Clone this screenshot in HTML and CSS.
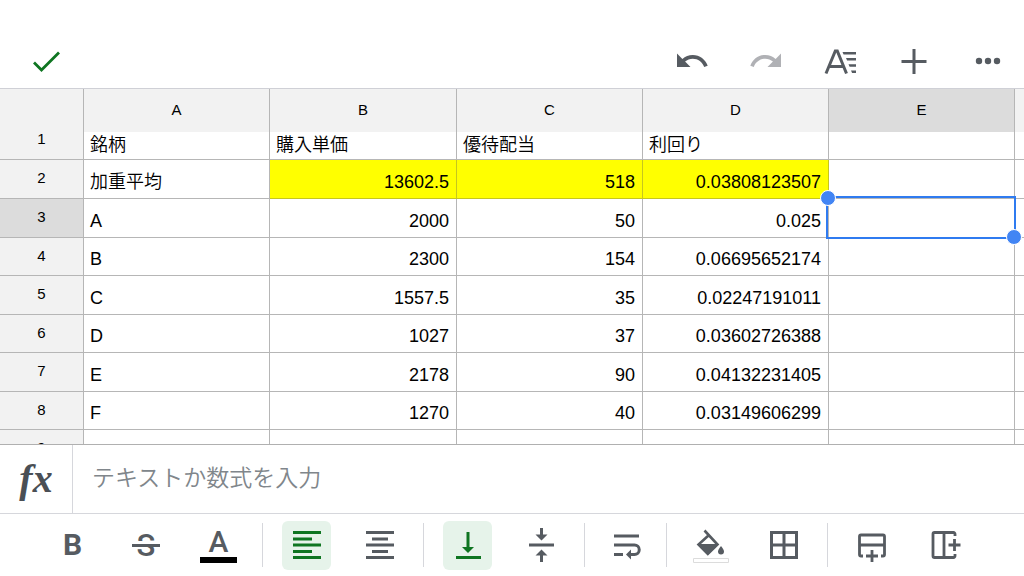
FILE: index.html
```html
<!DOCTYPE html>
<html lang="ja">
<head>
<meta charset="utf-8">
<meta name="viewport" content="width=device-width, initial-scale=1">
<title>スプレッドシート</title>
<link rel="stylesheet" href="styles.css">
</head>
<body>
<header class="topbar">
  <button class="icon-button done" type="button" aria-label="完了">
    <svg viewBox="0 0 36 36"><path d="M6 19.500l7.500 7.500L31 9.500" fill="none" stroke="currentColor" stroke-width="2.800"/></svg>
  </button>
  <div class="topbar-actions">
    <button class="icon-button" type="button" aria-label="元に戻す">
      <svg viewBox="0 0 24 24"><path fill="currentColor" d="M12.500 8c-2.650 0-5.050.990-6.900 2.600L2 7v9h9l-3.620-3.620c1.390-1.160 3.160-1.880 5.120-1.880 3.540 0 6.550 2.310 7.600 5.500l2.370-.780C21.080 11.030 17.150 8 12.500 8z"/></svg>
    </button>
    <button class="icon-button" type="button" aria-label="やり直す" disabled>
      <svg viewBox="0 0 24 24"><path fill="currentColor" d="M18.400 10.600C16.550 8.990 14.150 8 11.500 8c-4.650 0-8.580 3.030-9.960 7.220L3.900 16c1.050-3.190 4.050-5.500 7.600-5.500 1.950 0 3.730.720 5.120 1.880L13 16h9V7l-3.600 3.600z"/></svg>
    </button>
    <button class="icon-button" type="button" aria-label="書式">
      <svg viewBox="0 0 36 36"><g fill="none" stroke="currentColor" stroke-width="3"><path d="M4 30.500L13.300 8h2L24.500 30.500M8 23.500h13"/></g><path fill="currentColor" d="M20.500 9H34v2.600H21.600zM24 15h10v2.600h-8.900zM26.500 21.200H34v2.600h-6.400zM29 27.400h5V30h-3.900z"/></svg>
    </button>
    <button class="icon-button" type="button" aria-label="挿入">
      <svg viewBox="0 0 36 36"><path d="M18 6v25M5.500 18.500h25" fill="none" stroke="currentColor" stroke-width="3"/></svg>
    </button>
    <button class="icon-button" type="button" aria-label="その他">
      <svg viewBox="0 0 36 36" fill="currentColor"><circle cx="9" cy="18" r="3.200"/><circle cx="18" cy="18" r="3.200"/><circle cx="27" cy="18" r="3.200"/></svg>
    </button>
  </div>
</header>

<main class="sheet">
  <table class="grid">
    <colgroup><col class="col-index"><col class="col-data"><col class="col-data col-wide"><col class="col-data"><col class="col-data"><col class="col-data"><col></colgroup>
    <thead>
      <tr><td class="corner"></td><th scope="col">A</th><th scope="col">B</th><th scope="col">C</th><th scope="col">D</th><th scope="col" class="current">E</th><th scope="col"></th></tr>
    </thead>
    <tbody>
      <tr class="first"><th scope="row">1</th><td>銘柄</td><td>購入単価</td><td>優待配当</td><td>利回り</td><td></td><td></td></tr>
      <tr class="highlight"><th scope="row">2</th><td>加重平均</td><td class="num">13602.5</td><td class="num">518</td><td class="num">0.03808123507</td><td></td><td></td></tr>
      <tr><th scope="row" class="current">3</th><td>A</td><td class="num">2000</td><td class="num">50</td><td class="num">0.025</td><td class="selected"><span class="selection"></span></td><td></td></tr>
      <tr><th scope="row">4</th><td>B</td><td class="num">2300</td><td class="num">154</td><td class="num">0.06695652174</td><td></td><td></td></tr>
      <tr><th scope="row">5</th><td>C</td><td class="num">1557.5</td><td class="num">35</td><td class="num">0.02247191011</td><td></td><td></td></tr>
      <tr><th scope="row">6</th><td>D</td><td class="num">1027</td><td class="num">37</td><td class="num">0.03602726388</td><td></td><td></td></tr>
      <tr><th scope="row">7</th><td>E</td><td class="num">2178</td><td class="num">90</td><td class="num">0.04132231405</td><td></td><td></td></tr>
      <tr><th scope="row">8</th><td>F</td><td class="num">1270</td><td class="num">40</td><td class="num">0.03149606299</td><td></td><td></td></tr>
      <tr><th scope="row">9</th><td></td><td></td><td></td><td></td><td></td><td></td></tr>
    </tbody>
  </table>
</main>

<div class="formula">
  <label class="formula-label" for="formula">fx</label>
  <input class="formula-input" id="formula" type="text" placeholder="テキストか数式を入力">
</div>

<footer class="toolbar">
  <div class="group">
    <button class="tool bold" type="button" aria-label="太字">B</button>
    <button class="tool" type="button" aria-label="取り消し線">
      <svg viewBox="0 0 36 36"><text class="strike-letter" x="18" y="29" text-anchor="middle">S</text><path d="M6 15.500h24" stroke="#fff" stroke-width="3"/><path d="M4 18.500h28" stroke="currentColor" stroke-width="3"/></svg>
    </button>
    <button class="tool text-color" type="button" aria-label="文字の色">A</button>
  </div>
  <div class="group">
    <button class="tool active" type="button" aria-label="左揃え" aria-pressed="true">
      <svg viewBox="0 0 36 36"><path d="M4 5.500h28M4 12h19M4 18h28M4 24.500h19M4 30.500h28" fill="none" stroke="currentColor" stroke-width="3"/></svg>
    </button>
    <button class="tool" type="button" aria-label="中央揃え">
      <svg viewBox="0 0 36 36"><path d="M4 5.500h28M10 12h16M4 18h28M10 24.500h16M4 30.500h28" fill="none" stroke="currentColor" stroke-width="3"/></svg>
    </button>
  </div>
  <div class="group">
    <button class="tool active" type="button" aria-label="下揃え" aria-pressed="true">
      <svg viewBox="0 0 36 36"><path d="M6 30.500h25M18 5v16" fill="none" stroke="currentColor" stroke-width="3"/><path fill="currentColor" d="M12 20h12l-6 6z"/></svg>
    </button>
    <button class="tool" type="button" aria-label="上下中央揃え">
      <svg viewBox="0 0 36 36"><path d="M6 18h25M18.500 1v7M18.500 35v-7" fill="none" stroke="currentColor" stroke-width="3"/><path fill="currentColor" d="M12.500 7.500h12l-6 6zM12.500 28.500h12l-6-6z"/></svg>
    </button>
  </div>
  <div class="group narrow">
    <button class="tool" type="button" aria-label="テキストを折り返す">
      <svg viewBox="0 0 36 36"><path d="M6 9h25M6 18h20.500a4.500 4.500 0 0 1 0 9.500H23M6 27.500h9" fill="none" stroke="currentColor" stroke-width="3"/><path fill="currentColor" d="M18 27.500l5-5v10z"/></svg>
    </button>
  </div>
  <div class="group">
    <button class="tool" type="button" aria-label="塗りつぶしの色">
      <svg viewBox="0 0 36 36"><path d="M11.500 3.500L24.500 17.500 14.800 27 5.500 17.500 16 8" fill="none" stroke="currentColor" stroke-width="2.600"/><path fill="currentColor" d="M4 17h21.500L14.800 28zM28 19c2 2.500 3 4.200 3 5.500a3 3 0 0 1-6 0c0-1.300 1-3 3-5.500z"/><path d="M.5 31.500h35v4H.5z" fill="#fff" stroke="#dcdcdc"/></svg>
    </button>
    <button class="tool" type="button" aria-label="枠線">
      <svg viewBox="0 0 36 36"><path d="M5.500 5.500h25v25h-25zM18 5.500v25M5.500 18h25" fill="none" stroke="currentColor" stroke-width="3"/></svg>
    </button>
  </div>
  <div class="group">
    <button class="tool" type="button" aria-label="行を挿入">
      <svg viewBox="0 0 36 36"><path d="M9 29H7a1.500 1.500 0 0 1-1.500-1.500v-18A1.500 1.500 0 0 1 7 8h22a1.500 1.500 0 0 1 1.500 1.500v18A1.500 1.500 0 0 1 29 29h-2M5.500 18h25M18 23v12M12 29h12" fill="none" stroke="currentColor" stroke-width="2.800"/></svg>
    </button>
    <button class="tool" type="button" aria-label="列を挿入">
      <svg viewBox="0 0 36 36"><path d="M28 9V7a1.500 1.500 0 0 0-1.500-1.500h-19A1.500 1.500 0 0 0 6 7v22a1.500 1.500 0 0 0 1.500 1.500h19A1.500 1.500 0 0 0 28 29v-2M17 5.500v25M27.500 12v12M21.500 18h12" fill="none" stroke="currentColor" stroke-width="2.800"/></svg>
    </button>
  </div>
</footer>
</body>
</html>
```

FILE: styles.css
```css
* {
  box-sizing: border-box;
}

body {
  display: flex;
  flex-direction: column;
  height: 100vh;
  margin: 0;
  overflow: hidden;
  background: #fff;
  color: #000;
  font-family: "Liberation Sans", "Noto Sans CJK JP", sans-serif;
}

button {
  display: flex;
  align-items: center;
  justify-content: center;
  padding: 0;
  border: 0;
  background: none;
  color: #565b61;
}

svg {
  display: block;
  width: 36px;
  height: 36px;
}

.topbar {
  display: flex;
  flex: none;
  align-items: center;
  justify-content: space-between;
  height: 89px;
  padding: 33px 18px 0 28px;
  border-bottom: 1px solid #cfd0d6;
}

.topbar-actions {
  display: flex;
  gap: 38px;
}

.icon-button {
  width: 36px;
  height: 36px;
}

.icon-button:disabled {
  color: #b0b1b5;
}

.done {
  color: #0e7521;
}

.sheet {
  flex: 1;
  min-height: 0;
  overflow: hidden;
}

.grid {
  width: 100%;
  border-collapse: separate;
  border-spacing: 0;
  table-layout: fixed;
}

.col-index {
  width: 84px;
}

.col-data {
  width: 186px;
}

.col-wide {
  width: 187px;
}

.grid th,
.grid td {
  height: 39px;
  padding: 0 7px 3px 6px;
  border-right: 1px solid #b6b6b6;
  border-bottom: 1px solid #b6b6b6;
  font-size: 18px;
  font-weight: 350;
  line-height: 26px;
  text-align: left;
  vertical-align: bottom;
  white-space: nowrap;
}

.grid tr > :last-child {
  border-right: 0;
}

.grid tbody tr:nth-child(2n+4) > * {
  height: 38px;
}

.grid th {
  padding: 0 0 2px;
  background: #f2f2f2;
  font-size: 15px;
  font-weight: 400;
  line-height: 18px;
  text-align: center;
  vertical-align: middle;
}

.grid thead th,
.grid thead .corner {
  height: 43px;
  border-bottom: 0;
  background: #f2f2f2;
}

.grid .first > * {
  height: 28px;
  padding-bottom: 1px;
}

.grid .first th {
  line-height: 14px;
  vertical-align: top;
}

.grid .current,
.grid thead .current {
  background: #dcdcdc;
}

.grid .num {
  text-align: right;
}

.grid .highlight .num {
  border-color: #c6c61e;
  background: #ff0;
}

.grid .selected {
  position: relative;
}

.selection {
  position: absolute;
  inset: -3px -2px -2px -3px;
  border: 2px solid #2f7bf0;
}

.selection::before,
.selection::after {
  position: absolute;
  width: 14px;
  height: 14px;
  border: 1px solid #fff;
  border-radius: 50%;
  background: #4285f4;
  content: "";
}

.selection::before {
  top: -8px;
  left: -8px;
}

.selection::after {
  right: -8px;
  bottom: -8px;
}

.formula {
  display: flex;
  flex: none;
  height: 69px;
  border-top: 1px solid #b0b0b0;
}

.formula-label {
  width: 73px;
  border-right: 1px solid #d6d7dc;
  color: #4a4f55;
  font: italic 700 40px/68px "Liberation Serif", serif;
  text-align: center;
}

.formula-input {
  flex: 1;
  min-width: 0;
  padding: 0 19px 6px;
  border: 0;
  outline: 0;
  background: none;
  font: 350 23px "Noto Sans CJK JP", sans-serif;
}

.formula-input::placeholder {
  color: #80868b;
  opacity: 1;
}

.toolbar {
  display: flex;
  flex: none;
  align-items: center;
  height: 63px;
  padding-left: 29px;
  border-top: 1px solid #d6d7dc;
}

.group {
  display: flex;
  gap: 24px;
  padding: 0 19px;
}

.group + .group {
  align-items: center;
  height: 44px;
  border-left: 1px solid #d6d7dc;
}

.group.narrow {
  padding: 0 16px;
}

.tool {
  width: 49px;
  height: 49px;
  border-radius: 6px;
  font: 400 30px/30px Roboto, sans-serif;
}

.tool.active {
  background: #e6f3ea;
  color: #0e7521;
}

.tool.bold {
  font-weight: 700;
}

.strike-letter {
  fill: currentColor;
  font: 500 31px Roboto, sans-serif;
}

.tool.text-color {
  flex-direction: column;
  font-weight: 500;
}

.text-color::after {
  width: 37px;
  height: 6px;
  background: #000;
  content: "";
}
```
